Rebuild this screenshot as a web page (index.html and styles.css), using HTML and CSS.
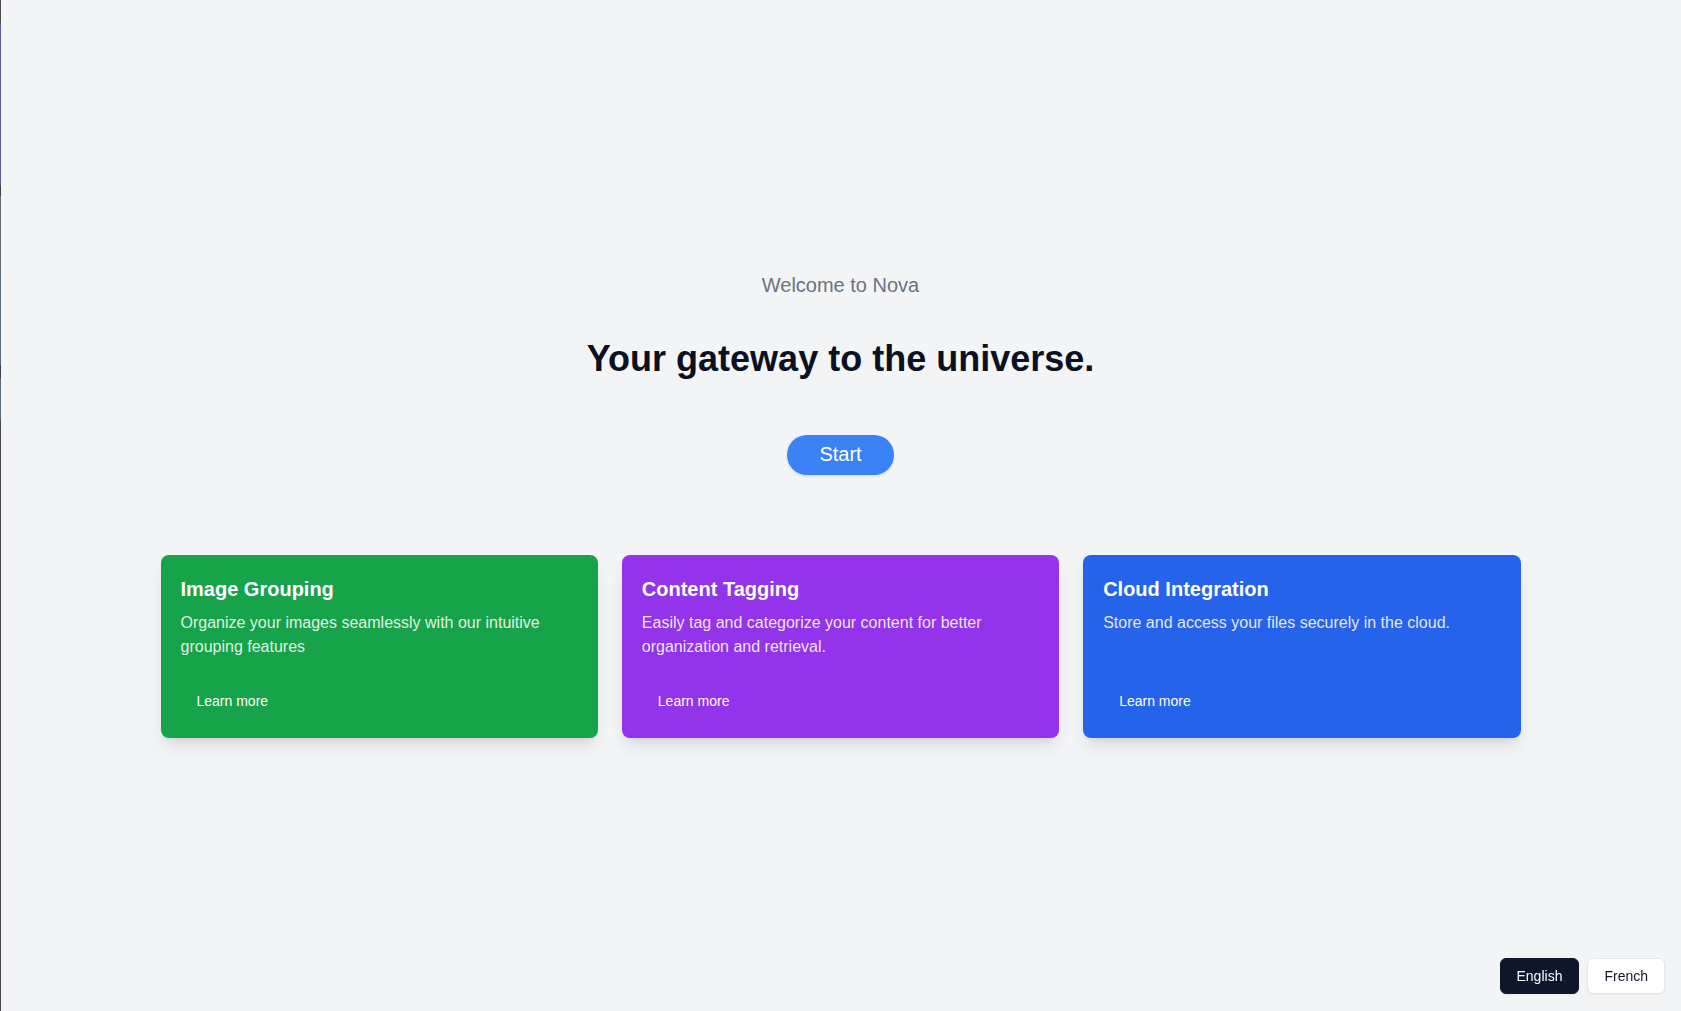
FILE: index.html
```html
<!DOCTYPE html>
<html lang="en">
<head>
<meta charset="utf-8">
<title>Nova</title>
<link rel="stylesheet" href="styles.css">
</head>
<body>
<div class="edge"></div>
<main class="hero">
  <p class="welcome">Welcome to Nova</p>
  <h1 class="headline">Your gateway to the universe.</h1>
  <button class="start">Start</button>
  <section class="cards">
    <article class="card card-green">
      <h2 class="card-title">Image Grouping</h2>
      <p class="card-text">Organize your images seamlessly with our intuitive grouping features</p>
      <button class="card-link">Learn more</button>
    </article>
    <article class="card card-purple">
      <h2 class="card-title">Content Tagging</h2>
      <p class="card-text">Easily tag and categorize your content for better organization and retrieval.</p>
      <button class="card-link">Learn more</button>
    </article>
    <article class="card card-blue">
      <h2 class="card-title">Cloud Integration</h2>
      <p class="card-text">Store and access your files securely in the cloud.</p>
      <button class="card-link">Learn more</button>
    </article>
  </section>
</main>
<div class="lang">
  <button class="lang-btn lang-active">English</button>
  <button class="lang-btn">French</button>
</div>
</body>
</html>
```
FILE: styles.css
```css
* { box-sizing: border-box; }
html, body { margin: 0; padding: 0; }
body {
  background: #f3f4f6;
  font-family: "Liberation Sans", Arial, Helvetica, sans-serif;
  color: #0f172a;
  min-height: 100vh;
}
.edge {
  position: fixed;
  left: 0;
  top: 0;
  width: 1px;
  height: 100vh;
  background: linear-gradient(to bottom,
    #4a4a4f 0, #4a4a4f 23px,
    #5b6290 23px, #5b6290 185px,
    #3f3f45 185px, #3f3f45 196px,
    #6a6d78 196px, #6a6d78 270px,
    #5a6a80 270px, #5a6a80 365px,
    #3f3f45 365px, #3f3f45 378px,
    #5a6a80 378px, #5a6a80 420px,
    #48484c 420px, #48484c 100%);
}
.hero {
  min-height: 100vh;
  display: flex;
  flex-direction: column;
  align-items: center;
  justify-content: center;
  padding: 0 160px 3px;
}
.welcome {
  margin: 0 0 40px;
  font-size: 20px;
  line-height: 28px;
  color: #6b7280;
}
.headline {
  margin: 0 0 56px;
  font-size: 36px;
  line-height: 40px;
  font-weight: 700;
  color: #0b1120;
}
.start {
  height: 40px;
  padding: 0 32px;
  border: none;
  border-radius: 9999px;
  background: #3b82f6;
  color: #fff;
  font-family: inherit;
  font-size: 20px;
  box-shadow: 0 1px 3px rgba(0,0,0,0.12);
  margin-bottom: 80px;
  cursor: pointer;
}
.cards {
  width: 1360px;
  display: grid;
  grid-template-columns: repeat(3, 1fr);
  gap: 24px;
}
.card {
  display: flex;
  flex-direction: column;
  align-items: flex-start;
  padding: 20px 20px 19px;
  border-radius: 8px;
  color: #fff;
  box-shadow: 0 10px 15px -3px rgba(0,0,0,0.1), 0 4px 6px -4px rgba(0,0,0,0.1);
}
.card-green { background: #16a34a; }
.card-purple { background: #9333ea; }
.card-blue { background: #2563eb; }
.card-title {
  margin: 0 0 8px;
  font-size: 20px;
  line-height: 28px;
  font-weight: 700;
}
.card-text {
  margin: 0 0 24px;
  font-size: 16px;
  line-height: 24px;
  color: rgba(255,255,255,0.88);
  min-height: 48px;
}
.card-link {
  margin-top: auto;
  height: 36px;
  padding: 0 16px;
  border: none;
  border-radius: 6px;
  background: transparent;
  color: #fff;
  font-family: inherit;
  font-size: 14px;
  line-height: 20px;
  cursor: pointer;
}
.lang {
  position: fixed;
  right: 16px;
  bottom: 17px;
  display: flex;
  gap: 8px;
}
.lang-btn {
  height: 36px;
  padding: 0 16px;
  border: 1px solid #e5e7eb;
  border-radius: 6px;
  background: #fff;
  color: #0f172a;
  font-family: inherit;
  font-size: 14px;
  box-shadow: 0 1px 2px rgba(0,0,0,0.05);
  cursor: pointer;
}
.lang-active {
  background: #0f172a;
  border-color: #0f172a;
  color: #f8fafc;
}
```
